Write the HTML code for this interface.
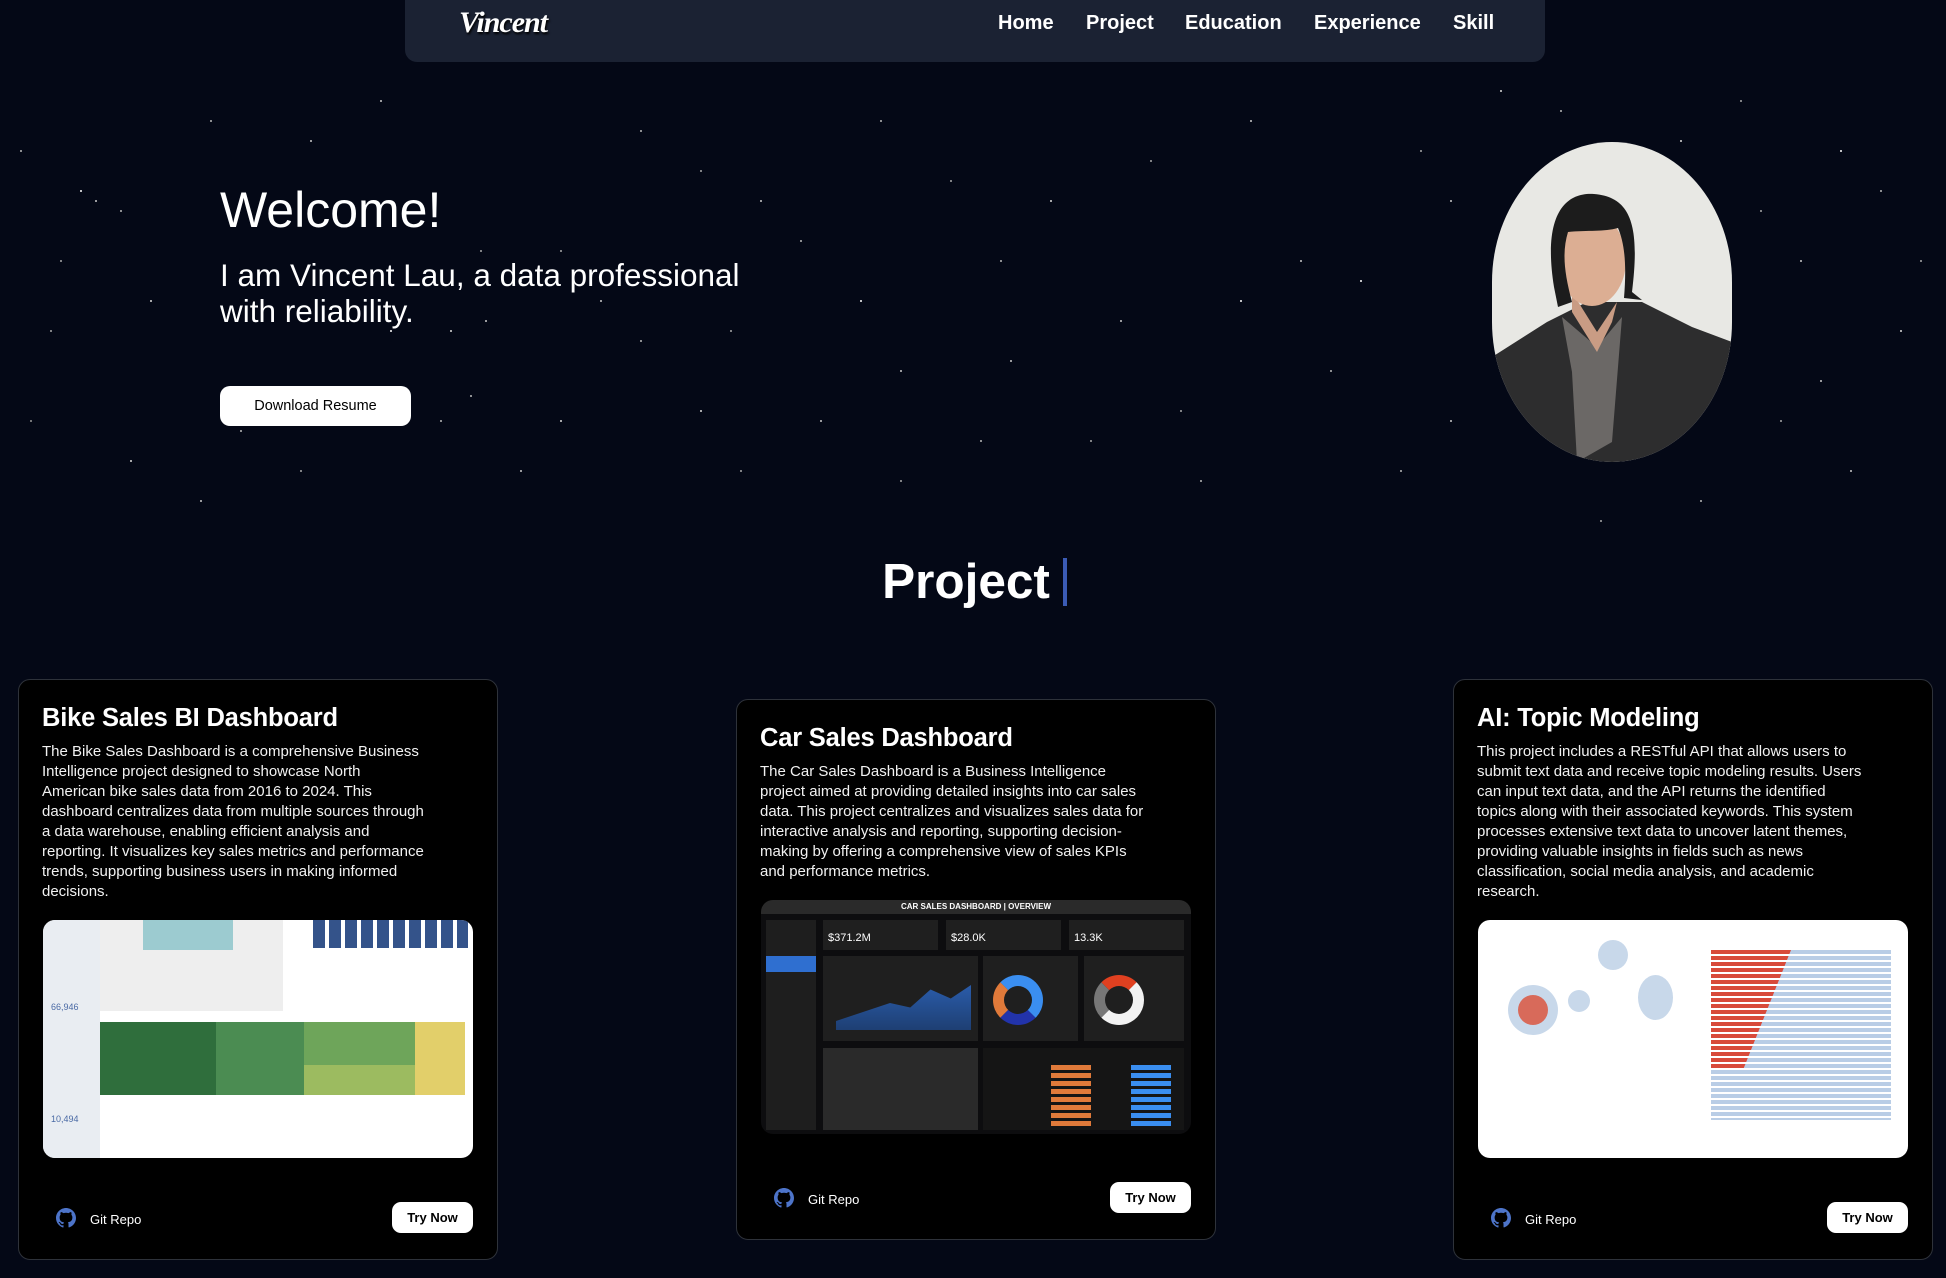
<!DOCTYPE html>
<html><head><meta charset="utf-8"><style>
*{margin:0;padding:0;box-sizing:border-box}
body{width:1946px;height:1278px;overflow:hidden;background:#040816;font-family:"Liberation Sans",Arial,sans-serif;color:#fff;position:relative}
.stars{position:absolute;left:0;top:0;width:2px;height:2px;border-radius:50%;background:transparent}
.nav{position:absolute;left:405px;top:0;width:1140px;height:62px;background:#1b2233;border-radius:0 0 12px 12px}
.logo{position:absolute;left:54px;top:6px;font-family:"Liberation Serif",serif;font-style:italic;font-weight:bold;font-size:30px;letter-spacing:-1px;text-shadow:1px 2px 2px #000}
.nav a{position:absolute;top:12px;font-size:20px;font-weight:bold;color:#fff;text-decoration:none}
.abs{position:absolute}
.btn{background:#fff;color:#000;border-radius:10px;text-align:center}
.card{position:absolute;width:480px;background:#000;border:1px solid #2e323a;border-radius:12px}
.card h3{position:absolute;left:23px;font-size:25.5px;font-weight:bold;white-space:nowrap;letter-spacing:-0.2px}
.card p{position:absolute;left:23px;font-size:15px;line-height:20px;white-space:nowrap;color:#f2f2f2}
.img{position:absolute;left:24px;width:430px;border-radius:12px;overflow:hidden}
.gh{position:absolute;left:37px;width:20px;height:20px}
.gr{position:absolute;left:71px;font-size:13px}
.try{position:absolute;left:373px;width:81px;height:31px;background:#fff;color:#000;border-radius:9px;font-size:13px;font-weight:bold;text-align:center;line-height:31px}
</style></head><body>
<div class="stars" style="box-shadow:
80px 190px #fff,120px 210px #bbb,95px 200px #ccc,60px 260px #aaa,150px 300px #ddd,30px 420px #999,210px 120px #bbb,310px 140px #ccc,390px 330px #fff,450px 330px #ddd,470px 395px #bbb,485px 320px #ccc,520px 280px #fff,560px 250px #aaa,600px 300px #ccc,640px 340px #bbb,700px 410px #ddd,730px 330px #aaa,760px 200px #ccc,800px 240px #bbb,860px 300px #fff,900px 370px #ccc,950px 180px #aaa,1000px 260px #bbb,1050px 200px #ddd,1120px 320px #ccc,1180px 410px #aaa,1240px 300px #fff,1300px 260px #ccc,1330px 370px #bbb,1360px 280px #fff,1420px 150px #aaa,1450px 200px #ccc,1500px 90px #ddd,1560px 110px #bbb,1760px 210px #aaa,1800px 260px #ccc,1840px 150px #fff,1880px 190px #bbb,1900px 330px #ddd,1780px 420px #aaa,1820px 380px #ccc,1700px 500px #bbb,1600px 520px #aaa,1450px 420px #ccc,1400px 470px #bbb,1620px 300px #fff,1680px 140px #ddd,1740px 100px #aaa,1250px 120px #ccc,1150px 160px #aaa,980px 440px #bbb,900px 480px #aaa,820px 420px #ccc,700px 170px #aaa,640px 130px #bbb,560px 420px #ddd,480px 250px #aaa,440px 420px #bbb,380px 100px #ccc,300px 470px #aaa,240px 430px #bbb,200px 500px #ccc,130px 460px #ddd,50px 330px #aaa,20px 150px #bbb,1850px 470px #ccc,1920px 260px #aaa,1550px 380px #ddd,1200px 480px #bbb,1090px 440px #aaa,1010px 360px #ccc,880px 120px #bbb,740px 470px #aaa,520px 470px #ccc"></div>
<div class="nav"><div class="logo">Vincent</div>
<a style="left:593px">Home</a><a style="left:681px">Project</a><a style="left:780px">Education</a><a style="left:909px">Experience</a><a style="left:1048px">Skill</a></div>

<div class="abs" style="left:220px;top:180px;font-size:50px;line-height:60px">Welcome!</div>
<div class="abs" style="left:220px;top:257px;font-size:31.5px;line-height:36px">I am Vincent Lau, a data professional<br>with reliability.</div>
<div class="abs btn" style="left:220px;top:386px;width:191px;height:40px;line-height:40px;font-size:14.5px">Download Resume</div>

<div class="abs" style="left:1492px;top:142px;width:240px;height:320px;border-radius:120px/140px;overflow:hidden;background:#e8e8e4">
<svg width="240" height="320" viewBox="0 0 240 320">
<path d="M0 215 L55 180 L95 160 L150 160 L200 185 L240 200 L240 320 L0 320Z" fill="#2d2d2e"/>
<path d="M70 175 L105 205 L130 175 L120 300 L85 320 L80 230Z" fill="#6b6866"/>
<path d="M80 150 L105 190 L125 160 L120 180 L105 210 L80 170Z" fill="#c99c84"/>
<ellipse cx="100" cy="118" rx="34" ry="46" fill="#dcae93"/>
<path d="M62 145 C50 70 75 50 102 52 C140 55 148 85 140 150 L150 158 L132 156 C135 120 132 100 126 86 C112 90 96 88 76 90 C70 110 72 130 80 160 L66 165Z" fill="#1c1c1c"/>
</svg></div>

<div class="abs" style="left:0;width:1946px;text-align:center;top:552px;font-size:49.5px;font-weight:bold;line-height:60px;padding-right:14px">Project</div>
<div class="abs" style="left:1063px;top:558px;width:4px;height:48px;background:#3b5bb5"></div>

<!-- card 1 -->
<div class="card" style="left:18px;top:679px;height:581px">
<h3 style="top:24px">Bike Sales BI Dashboard</h3>
<p style="top:62px">The Bike Sales Dashboard is a comprehensive Business<br>Intelligence project designed to showcase North<br>American bike sales data from 2016 to 2024. This<br>dashboard centralizes data from multiple sources through<br>a data warehouse, enabling efficient analysis and<br>reporting. It visualizes key sales metrics and performance<br>trends, supporting business users in making informed<br>decisions.</p>
<div class="img" style="top:240px;height:238px;background:#fff">
<div class="abs" style="left:0;top:0;width:57px;height:238px;background:#e9edf2"></div>
<div class="abs" style="left:8px;top:82px;font-size:9px;color:#4a6aa5">66,946</div>
<div class="abs" style="left:8px;top:194px;font-size:9px;color:#4a6aa5">10,494</div>
<div class="abs" style="left:57px;top:0;width:183px;height:91px;background:#eee"></div>
<div class="abs" style="left:100px;top:0;width:90px;height:30px;background:#9ccbd0"></div>
<div class="abs" style="left:270px;top:0;width:155px;height:28px;background:repeating-linear-gradient(90deg,#34538a 0 12px,#fff 12px 16px)"></div>
<div class="abs" style="left:57px;top:102px;width:116px;height:73px;background:#2f6e3c"></div>
<div class="abs" style="left:173px;top:102px;width:88px;height:73px;background:#4b8c52"></div>
<div class="abs" style="left:261px;top:102px;width:111px;height:43px;background:#6ea55a"></div>
<div class="abs" style="left:261px;top:145px;width:111px;height:30px;background:#9cbb60"></div>
<div class="abs" style="left:372px;top:102px;width:50px;height:73px;background:#e2cf6a"></div>
</div>
<svg class="gh" style="top:528px" viewBox="0 0 16 16"><path fill="#4d74c9" d="M8 0C3.6 0 0 3.6 0 8c0 3.5 2.3 6.5 5.5 7.6.4.1.5-.2.5-.4v-1.4c-2.2.5-2.7-1-2.7-1-.4-.9-.9-1.2-.9-1.2-.7-.5.1-.5.1-.5.8.1 1.200.8 1.2.8.7 1.2 1.9.9 2.3.7.1-.5.3-.9.5-1.1-1.8-.2-3.6-.9-3.6-4 0-.9.3-1.6.8-2.1-.1-.2-.4-1 .1-2.1 0 0 .7-.2 2.2.8.6-.2 1.3-.3 2-.3s1.4.1 2 .3c1.5-1 2.2-.8 2.2-.8.4 1.1.2 1.9.1 2.1.5.6.8 1.3.8 2.1 0 3.1-1.9 3.7-3.6 3.9.3.3.5.8.5 1.5v2.2c0 .2.1.5.6.4C13.7 14.5 16 11.5 16 8c0-4.4-3.6-8-8-8z"/></svg>
<div class="gr" style="top:532px">Git Repo</div>
<div class="try" style="top:522px">Try Now</div>
</div>

<!-- card 2 -->
<div class="card" style="left:736px;top:699px;height:541px">
<h3 style="top:24px">Car Sales Dashboard</h3>
<p style="top:62px">The Car Sales Dashboard is a Business Intelligence<br>project aimed at providing detailed insights into car sales<br>data. This project centralizes and visualizes sales data for<br>interactive analysis and reporting, supporting decision-<br>making by offering a comprehensive view of sales KPIs<br>and performance metrics.</p>
<div class="img" style="top:200px;height:234px;background:#0d0d0f">
<div class="abs" style="left:0;top:0;width:430px;height:14px;background:#2a2a2a;font-size:8px;font-weight:bold;text-align:center;line-height:14px">CAR SALES DASHBOARD | OVERVIEW</div>
<div class="abs" style="left:5px;top:20px;width:50px;height:210px;background:#1e1e1e"></div>
<div class="abs" style="left:5px;top:56px;width:50px;height:16px;background:#2f6fd0"></div>
<div class="abs" style="left:62px;top:20px;width:115px;height:30px;background:#1f1f1f;font-size:11px;padding:12px 0 0 5px">$371.2M</div>
<div class="abs" style="left:185px;top:20px;width:115px;height:30px;background:#1f1f1f;font-size:11px;padding:12px 0 0 5px">$28.0K</div>
<div class="abs" style="left:308px;top:20px;width:115px;height:30px;background:#1f1f1f;font-size:11px;padding:12px 0 0 5px">13.3K</div>
<div class="abs" style="left:62px;top:56px;width:155px;height:85px;background:#1f1f1f"></div>
<div class="abs" style="left:75px;top:85px;width:135px;height:45px;background:linear-gradient(0deg,#1e3f73,#2a5caa);clip-path:polygon(0 80%,20% 60%,40% 40%,55% 50%,70% 10%,85% 30%,100% 0,100% 100%,0 100%)"></div>
<div class="abs" style="left:222px;top:56px;width:95px;height:85px;background:#1f1f1f"></div>
<div class="abs" style="left:232px;top:75px;width:50px;height:50px;border-radius:50%;border:11px solid #3a8ef0;border-left-color:#e07a3a;border-bottom-color:#2233aa"></div>
<div class="abs" style="left:323px;top:56px;width:100px;height:85px;background:#1f1f1f"></div>
<div class="abs" style="left:333px;top:75px;width:50px;height:50px;border-radius:50%;border:11px solid #f2f2f2;border-left-color:#777;border-top-color:#e04020"></div>
<div class="abs" style="left:62px;top:148px;width:155px;height:82px;background:#2a2a2a"></div>
<div class="abs" style="left:222px;top:148px;width:201px;height:82px;background:#151515"></div>
<div class="abs" style="left:290px;top:165px;width:40px;height:62px;background:repeating-linear-gradient(180deg,#e07a3a 0 5px,transparent 5px 8px)"></div>
<div class="abs" style="left:370px;top:165px;width:40px;height:62px;background:repeating-linear-gradient(180deg,#3a8ef0 0 5px,transparent 5px 8px)"></div>
</div>
<svg class="gh" style="top:488px" viewBox="0 0 16 16"><path fill="#4d74c9" d="M8 0C3.6 0 0 3.6 0 8c0 3.5 2.3 6.5 5.5 7.6.4.1.5-.2.5-.4v-1.4c-2.2.5-2.7-1-2.7-1-.4-.9-.9-1.2-.9-1.2-.7-.5.1-.5.1-.5.8.1 1.2.8 1.2.8.7 1.2 1.9.9 2.3.7.1-.5.3-.9.5-1.1-1.8-.2-3.6-.9-3.6-4 0-.9.3-1.6.8-2.1-.1-.2-.4-1 .1-2.1 0 0 .7-.2 2.2.8.6-.2 1.3-.3 2-.3s1.4.1 2 .3c1.5-1 2.2-.8 2.2-.8.4 1.1.2 1.9.1 2.1.5.6.8 1.3.8 2.1 0 3.1-1.9 3.7-3.6 3.9.3.3.5.8.5 1.5v2.2c0 .2.1.5.6.4C13.7 14.5 16 11.5 16 8c0-4.4-3.6-8-8-8z"/></svg>
<div class="gr" style="top:492px">Git Repo</div>
<div class="try" style="top:482px">Try Now</div>
</div>

<!-- card 3 -->
<div class="card" style="left:1453px;top:679px;height:581px">
<h3 style="top:24px">AI: Topic Modeling</h3>
<p style="top:62px">This project includes a RESTful API that allows users to<br>submit text data and receive topic modeling results. Users<br>can input text data, and the API returns the identified<br>topics along with their associated keywords. This system<br>processes extensive text data to uncover latent themes,<br>providing valuable insights in fields such as news<br>classification, social media analysis, and academic<br>research.</p>
<div class="img" style="top:240px;height:238px;background:#fff">
<div class="abs" style="left:30px;top:65px;width:50px;height:50px;border-radius:50%;background:#c8d8ea"></div>
<div class="abs" style="left:40px;top:75px;width:30px;height:30px;border-radius:50%;background:#d86a5a"></div>
<div class="abs" style="left:120px;top:20px;width:30px;height:30px;border-radius:50%;background:#c8d8ea"></div>
<div class="abs" style="left:160px;top:55px;width:35px;height:45px;border-radius:50%;background:#c8d8ea"></div>
<div class="abs" style="left:90px;top:70px;width:22px;height:22px;border-radius:50%;background:#c8d8ea"></div>
<div class="abs" style="left:233px;top:30px;width:180px;height:170px;background:repeating-linear-gradient(180deg,#b9cde6 0 4px,transparent 4px 6px)"></div>
<div class="abs" style="left:233px;top:30px;width:80px;height:120px;background:repeating-linear-gradient(180deg,#d84a3a 0 4px,transparent 4px 6px);clip-path:polygon(0 0,100% 0,40% 100%,0 100%)"></div>
</div>
<svg class="gh" style="top:528px" viewBox="0 0 16 16"><path fill="#4d74c9" d="M8 0C3.6 0 0 3.6 0 8c0 3.5 2.3 6.5 5.5 7.6.4.1.5-.2.5-.4v-1.4c-2.2.5-2.7-1-2.7-1-.4-.9-.9-1.2-.9-1.2-.7-.5.1-.5.1-.5.8.1 1.2.8 1.2.8.7 1.2 1.9.9 2.3.7.1-.5.3-.9.5-1.1-1.8-.2-3.6-.9-3.6-4 0-.9.3-1.6.8-2.1-.1-.2-.4-1 .1-2.1 0 0 .7-.2 2.2.8.6-.2 1.3-.3 2-.3s1.4.1 2 .3c1.5-1 2.2-.8 2.2-.8.4 1.1.2 1.9.1 2.1.5.6.8 1.3.8 2.1 0 3.1-1.9 3.7-3.6 3.9.3.3.5.8.5 1.5v2.2c0 .2.1.5.6.4C13.7 14.5 16 11.5 16 8c0-4.4-3.6-8-8-8z"/></svg>
<div class="gr" style="top:532px">Git Repo</div>
<div class="try" style="top:522px">Try Now</div>
</div>
</body></html>
